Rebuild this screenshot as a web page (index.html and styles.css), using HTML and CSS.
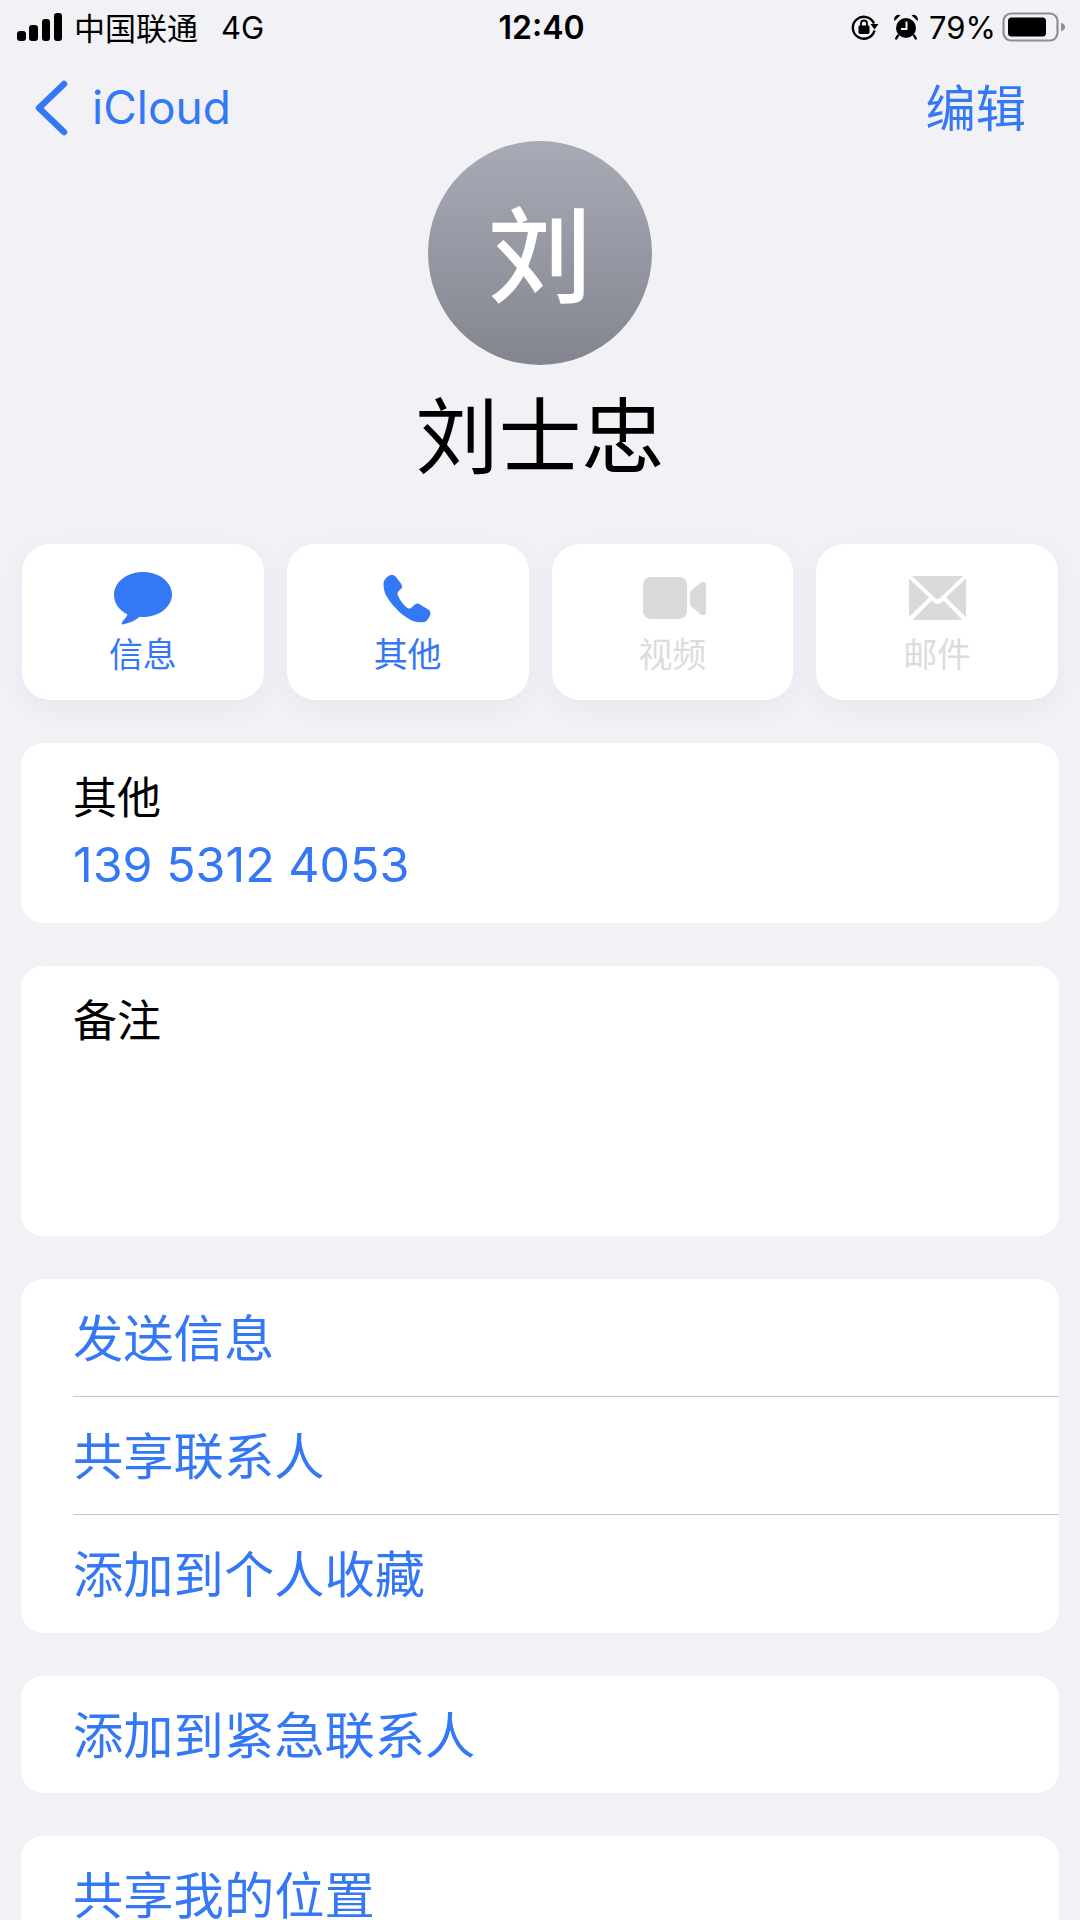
FILE: index.html
```html
<!DOCTYPE html>
<html lang="zh-CN">
<head>
<meta charset="utf-8">
<title>刘士忠</title>
<link rel="stylesheet" href="styles.css">
</head>
<body>
<div class="screen">
  <header class="status">
    <div class="status-left">
      <svg class="signal" width="46" height="28" viewBox="0 0 46 28"><rect x="0" y="18" width="9" height="10" rx="3"/><rect x="12" y="12" width="9" height="16" rx="3"/><rect x="25" y="6" width="8" height="22" rx="3"/><rect x="37" y="0" width="8" height="28" rx="3"/></svg>
      <span class="carrier">中国联通</span>
      <span class="net">4G</span>
    </div>
    <div class="status-time">12:40</div>
    <div class="status-right">
      <svg class="rot" width="28" height="26" viewBox="0 0 28 26"><path d="M23 9.500A11 11 0 1 0 23.500 16.500" fill="none" stroke="#000" stroke-width="2.400"/><path d="M19.500 10h8l-4 5.500z"/><rect x="7.500" y="11.500" width="11" height="8.500" rx="1.400"/><path d="M10 12V9.500a3 3 0 0 1 6 0V12" fill="none" stroke="#000" stroke-width="1.800"/></svg>
      <svg class="alarm" width="24" height="26" viewBox="0 0 24 26"><circle cx="12" cy="14" r="10"/><path d="M0.500 7A4.500 4.500 0 0 1 6.500 1.200zM23.500 7A4.500 4.500 0 0 0 17.500 1.200z"/><path d="M4 21.500l-1.800 3M20 21.500l1.800 3" stroke="#000" stroke-width="2.400" stroke-linecap="round"/><path d="M12.500 7.500v7.500H7" fill="none" stroke="#f1f1f6" stroke-width="2"/></svg>
      <span class="pct">79%</span>
      <svg class="battery" width="64" height="30" viewBox="0 0 64 30"><rect x="1.500" y="1.500" width="54" height="27" rx="7.500" fill="none" stroke="#8e8e93" stroke-width="2.200"/><rect x="6" y="5.500" width="38" height="19" rx="3.500"/><path d="M59 11c3 .6 4 2 4 4s-1 3.400-4 4z" fill="#8e8e93"/></svg>
    </div>
  </header>

  <nav class="navbar">
    <a class="back">
      <svg width="34" height="56" viewBox="0 0 34 56"><path d="M30 4L5 28l25 24" fill="none" stroke="#3478f6" stroke-width="6.500" stroke-linecap="round" stroke-linejoin="round"/></svg>
      <span class="back-text">iCloud</span>
    </a>
    <a class="edit">编辑</a>
  </nav>

  <section class="profile">
    <div class="avatar">刘</div>
    <h1 class="name">刘士忠</h1>
  </section>

  <section class="actions">
    <div class="action">
      <svg class="icon" width="58" height="56" viewBox="0 0 58 56"><path d="M29 0C13 0 0 10 0 23c0 8.500 5.500 15.500 13.500 19.500-1.500 3-4 5.700-5.500 7.800-.9 1.300 0 2.400 1.700 2 5.500-1.200 12-3.800 16-7.500 1.200.1 2.300.2 3.300.2 16 0 29-10 29-22.500S45 0 29 0z" fill="#3478f6"/></svg>
      <span>信息</span>
    </div>
    <div class="action">
      <svg class="icon" width="50" height="56" viewBox="0 0 50 56"><path d="M4.500 4.700C6 3.500 7 3 8.500 3c2 0 3.300.5 4.300 1.700l5 6.600c1.200 1.700 1.700 3.700.7 5L15 19.700c-.7.800-.5 2.800.2 4.300 1.800 4 4.300 7.500 7.600 10.700 1.700 1.300 3.700 2.300 5 1.600l3.400-3.300c1.800-1.500 3.300-2 5-1l9.800 6c1.500 1.500 1.800 3.500 1.200 5-1.700 4.500-4.200 7.300-7.700 7.300-4 0-8-.3-11.700-2.300-5.800-3-10.800-7-15-11.700C8 31.500 5 27 2.800 23 1 19 .5 15 .5 11.300.5 9 2.500 6 4.500 4.700z" fill="#3478f6"/></svg>
      <span>其他</span>
    </div>
    <div class="action off">
      <svg class="icon video" width="64" height="56" viewBox="0 0 64 56"><rect x="0" y="5" width="44" height="42" rx="8" fill="#dadadd"/><path d="M47 21c0-1 .4-1.800 1.200-2.500l9.500-8c1.700-1.400 5.300-.6 5.300 2v28c0 2.600-3.600 3.400-5.300 2l-9.500-8c-.8-.7-1.200-1.500-1.200-2.500z" fill="#dadadd"/></svg>
      <span>视频</span>
    </div>
    <div class="action off">
      <svg class="icon" width="57" height="56" viewBox="0 0 57 56"><path d="M3 4h51L31.500 25.500q-3 3-6 0z" fill="#dadadd"/><path d="M0 6.500L20 25.500 0 45zM57 6.500L37 25.500 57 45z" fill="#dadadd"/><path d="M3.500 48l19-19.500 3 2.500q3 2 6 0l3-2.500 19 19.500z" fill="#dadadd"/></svg>
      <span>邮件</span>
    </div>
  </section>

  <section class="card phone">
    <div class="label">其他</div>
    <div class="number">139 5312 4053</div>
  </section>

  <section class="card notes">
    <div class="label">备注</div>
  </section>

  <section class="card list">
    <div class="row">发送信息</div>
    <div class="row">共享联系人</div>
    <div class="row">添加到个人收藏</div>
  </section>

  <section class="card list single">
    <div class="row">添加到紧急联系人</div>
  </section>

  <section class="card list">
    <div class="row">共享我的位置</div>
  </section>
</div>
</body>
</html>
```

FILE: styles.css
```css
* { box-sizing: border-box; }
html, body { margin: 0; padding: 0; }
body {
  width: 1080px;
  height: 1920px;
  overflow: hidden;
  background: #f1f1f6;
  font-family: "Noto Sans CJK SC", "Inter", "Liberation Sans", sans-serif;
  color: #000;
}
.screen { display: flex; flex-direction: column; height: 1920px; overflow: hidden; }

.status {
  height: 54px;
  flex: none;
  display: grid;
  grid-template-columns: 1fr auto 1fr;
  align-items: center;
  padding: 0 14px 0 17px;
  font-size: 28px;
}
.status-left { display: flex; align-items: center; }
.signal { margin-right: 11px; }
.carrier { font-size: 31px; line-height: 40px; }
.net { margin-left: 23px; font-family: "Inter", sans-serif; font-size: 31px; }
.status-time { font-family: "Inter", sans-serif; font-weight: 600; font-size: 32px; }
.status-right { display: flex; align-items: center; justify-content: flex-end; }
.status-right .rot { margin-right: 15px; }
.status-right .alarm { margin-right: 11px; }
.pct { font-family: "Inter", sans-serif; font-size: 31px; margin-right: 6px; }

.navbar {
  height: 86px;
  flex: none;
  display: flex;
  align-items: center;
  justify-content: space-between;
  padding: 21px 54px 0 34px;
  color: #3478f6;
}
.back { display: flex; align-items: center; font-family: "Inter", sans-serif; font-size: 46px; gap: 24px; }
.back-text { margin-bottom: 2px; }
.edit { font-size: 50.300px; margin-bottom: 6px; }

.profile { display: flex; flex-direction: column; align-items: center; flex: none; }
.avatar {
  width: 224px;
  height: 224px;
  margin-top: 1px;
  padding-bottom: 8px;
  border-radius: 50%;
  background: linear-gradient(#a8abb6, #83868f);
  color: #fff;
  font-size: 104px;
  font-weight: 500;
  display: flex;
  align-items: center;
  justify-content: center;
}
.name { margin: 11px 0 0; font-size: 83px; font-weight: 400; line-height: 110px; }

.actions {
  margin-top: 58px;
  padding: 0 22px;
  display: grid;
  grid-template-columns: repeat(4, 1fr);
  gap: 23px;
  flex: none;
}
.action {
  height: 156px;
  background: #fff;
  border-radius: 28px;
  box-shadow: 0 8px 26px rgba(110, 110, 150, .08);
  display: flex;
  flex-direction: column;
  align-items: center;
  color: #3478f6;
  font-size: 34px;
  padding-top: 28px;
}
.icon { flex: none; }
.icon.video { margin-left: 6px; }
.action span { line-height: 44px; margin-top: 3px; }
.action.off { color: #dcdce0; }

.card {
  margin: 43px 21px 0;
  background: #fff;
  border-radius: 22px;
  flex: none;
  padding-left: 52px;
}
.label { font-size: 44px; line-height: 56px; }
.phone { height: 180px; padding-top: 24px; }
.number { color: #3478f6; font-family: "Inter", sans-serif; font-size: 48.400px; line-height: 60px; margin-top: 12px; }
.notes { height: 270px; padding-top: 24px; }
.row {
  height: 118px;
  padding-bottom: 6px;
  display: flex;
  align-items: center;
  color: #3478f6;
  font-size: 50.300px;
  border-bottom: 1px solid #c6c6c8;
}
.row:last-child { border-bottom: none; }
.single { height: 117px; }
```
